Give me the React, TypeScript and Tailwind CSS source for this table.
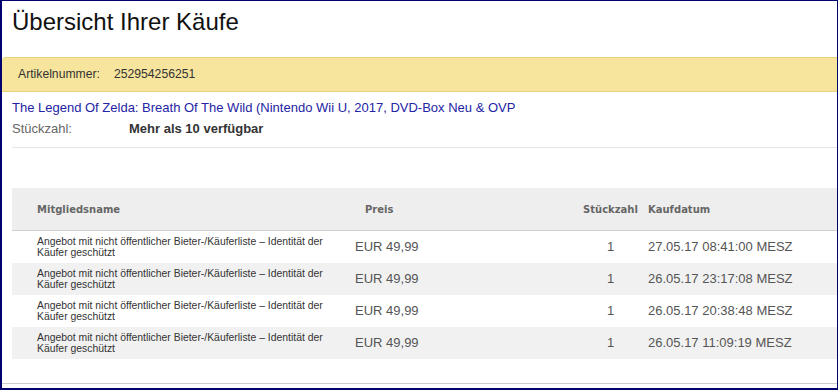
const purchases = [
  { price: "EUR 49,99", qty: 1, date: "27.05.17 08:41:00 MESZ" },
  { price: "EUR 49,99", qty: 1, date: "26.05.17 23:17:08 MESZ" },
  { price: "EUR 49,99", qty: 1, date: "26.05.17 20:38:48 MESZ" },
  { price: "EUR 49,99", qty: 1, date: "26.05.17 11:09:19 MESZ" },
];

const cols = "grid grid-cols-[343px_223px_65px_1fr]";

export default function App() {
  return (
    <div className="w-[838px] h-[390px] overflow-hidden bg-white border-t border-l-2 border-r border-b-2 border-[#00006e] font-['Liberation_Sans',Arial,sans-serif] flex flex-col">
      <h1 className="pt-[7px] pl-[10px] text-[24px] leading-[28px] text-[#111]">
        Übersicht Ihrer Käufe
      </h1>

      {/* item number bar */}
      <div className="mt-[21px] h-[35px] flex items-center pl-[16px] bg-[#f7e59d] border-y border-[#e9d27c] rounded-tl-[4px] text-[12.2px] text-[#333]">
        <span>Artikelnummer:</span>
        <span className="ml-[14px]">252954256251</span>
      </div>

      <div className="pl-[10px] mt-[6px]">
        <div className="h-[20px] flex items-center text-[13px] text-[#2424a4]">
          The Legend Of Zelda: Breath Of The Wild (Nintendo Wii U, 2017, DVD-Box Neu &amp; OVP
        </div>
        <div className="h-[22px] flex items-center text-[13px]">
          <span className="w-[117px] text-[#666]">Stückzahl:</span>
          <span className="font-bold text-[#333]">Mehr als 10 verfügbar</span>
        </div>
        <div className="mt-[7px] h-px bg-[#e6e6e6]" />
      </div>

      {/* purchase table */}
      <div className="ml-[10px] mt-[40px]">
        <div className={`${cols} h-[43px] items-center bg-[#eeeeee] border-b border-[#cfcfcf] font-['DejaVu_Sans',Verdana,sans-serif] font-bold text-[10px] text-[#666]`}>
          <div className="pl-[25px]">Mitgliedsname</div>
          <div className="pl-[10px]">Preis</div>
          <div className="text-center">Stückzahl</div>
          <div className="pl-[5px]">Kaufdatum</div>
        </div>
        {purchases.map((p, i) => (
          <div
            key={i}
            className={`${cols} h-[32px] items-center ${i % 2 === 1 ? "bg-[#f1f1f1]" : "bg-white"}`}
          >
            <div className="pl-[25px] pr-[15px] text-[10.4px] leading-[11px] text-[#333]">
              Angebot mit nicht öffentlicher Bieter-/Käuferliste – Identität der Käufer geschützt
            </div>
            <div className="text-[13px] text-[#555]">{p.price}</div>
            <div className="text-center text-[13px] text-[#555]">{p.qty}</div>
            <div className="pl-[5px] text-[13px] text-[#555]">{p.date}</div>
          </div>
        ))}
      </div>

      <div className="mt-[24px] h-px bg-[#cccccc]" />
    </div>
  );
}
